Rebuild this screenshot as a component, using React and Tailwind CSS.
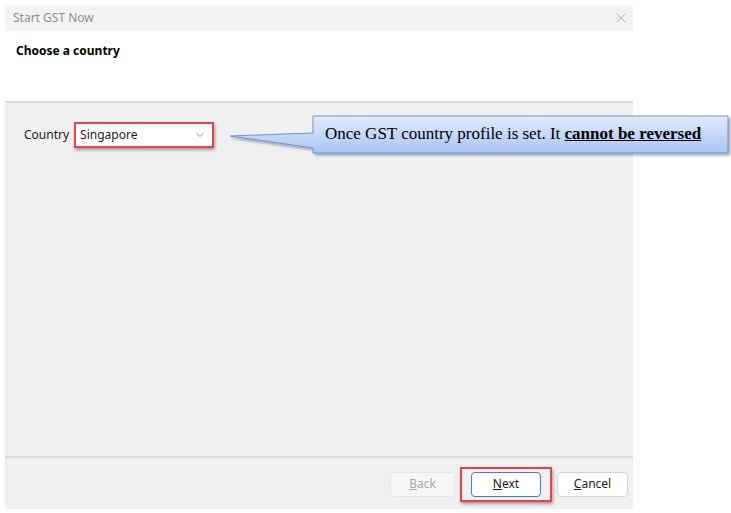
import { ChevronDown, X } from 'lucide-react'

const UI_FONT = "font-['Segoe_UI','Noto_Sans','Open_Sans',sans-serif]"

function Button({ children, disabled, focused }) {
  return (
    <div
      className={`h-[25px] flex items-center justify-center rounded-[4px] text-[12px] ${
        disabled
          ? 'w-[65px] bg-[#f7f7f7] border border-[#e6e6e6] text-[#a8a8a8]'
          : focused
            ? 'w-[70px] bg-white border border-[#3b82c4] text-[#1b1b1b]'
            : 'w-[71px] bg-white border border-[#d4d4d4] text-[#1b1b1b]'
      }`}
    >
      {children}
    </div>
  )
}

export default function App() {
  return (
    <div className={`relative w-[731px] h-[513px] bg-white overflow-hidden ${UI_FONT}`}>
      {/* dialog window */}
      <div className="ml-[5px] pt-[5px] w-[628px] h-[509px] flex flex-col">
        <div className="h-[26px] shrink-0 bg-[#f3f3f3] flex items-center justify-between pl-[8px] pr-[4px]">
          <span className="text-[12px] text-[#8f8f8f]">Start GST Now</span>
          <X size={16} strokeWidth={1} className="text-[#8a8a8a]" />
        </div>

        <div className="h-[70px] shrink-0 bg-white pl-[11px] pt-[11px]">
          <h1 className="text-[12px] font-bold text-black">Choose a country</h1>
        </div>

        <div className="h-[2px] shrink-0 bg-[#d9d9d9]" />

        <div className="flex-1 bg-[#f0f0f0] pl-[19px] pt-[19px]">
          <div className="flex items-center gap-[5px]">
            <span className="text-[12px] text-[#1b1b1b]">Country</span>
            {/* red highlight around dropdown */}
            <div className="p-[2px] border-2 border-[#e8424a] shadow-[1px_2px_3px_rgba(0,0,0,0.35)] bg-white">
              <div className="w-[132px] h-[18px] bg-white flex items-center justify-between pl-[2px] pr-[4px]">
                <span className="text-[12px] text-[#1b1b1b]">Singapore</span>
                <ChevronDown size={12} strokeWidth={1.5} className="text-[#6a6a6a]" />
              </div>
            </div>
          </div>
        </div>

        <div className="h-[2px] shrink-0 bg-[#d9d9d9]" />

        <div className="h-[51px] shrink-0 bg-[#f0f0f0] flex items-center justify-end pr-[5px] pt-[1px]">
          <Button disabled>
            <span><u>B</u>ack</span>
          </Button>
          <div className="ml-[5px] mr-[5px] px-[9px] py-[3px] border-2 border-[#e8424a] shadow-[1px_2px_3px_rgba(0,0,0,0.35)]">
            <Button focused>
              <span><u>N</u>ext</span>
            </Button>
          </div>
          <Button>
            <span><u>C</u>ancel</span>
          </Button>
        </div>
      </div>

      {/* callout annotation */}
      <svg className="absolute left-0 top-0" width="731" height="513" viewBox="0 0 731 513">
        <defs>
          <linearGradient id="calloutFill" x1="0" y1="0" x2="0" y2="1">
            <stop offset="0" stopColor="#e3ecfc" />
            <stop offset="1" stopColor="#a9c3f3" />
          </linearGradient>
          <filter id="calloutShadow" x="-5%" y="-20%" width="110%" height="150%">
            <feDropShadow dx="2" dy="2" stdDeviation="1.5" floodColor="#000" floodOpacity="0.35" />
          </filter>
        </defs>
        <path
          d="M230 136 L313 133 L313 116 L728 116 L728 153 L313 153 L313 148 Z"
          fill="url(#calloutFill)"
          stroke="#6f93d2"
          strokeWidth="1"
          filter="url(#calloutShadow)"
        />
      </svg>
      <div className="absolute left-[313px] top-[116px] w-[415px] h-[36px] flex items-center pl-[12px] font-['Liberation_Serif','Times_New_Roman',serif] text-[17px] text-black">
        <span>
          Once GST country profile is set. It <b className="underline">cannot be reversed</b>
        </span>
      </div>
    </div>
  )
}
